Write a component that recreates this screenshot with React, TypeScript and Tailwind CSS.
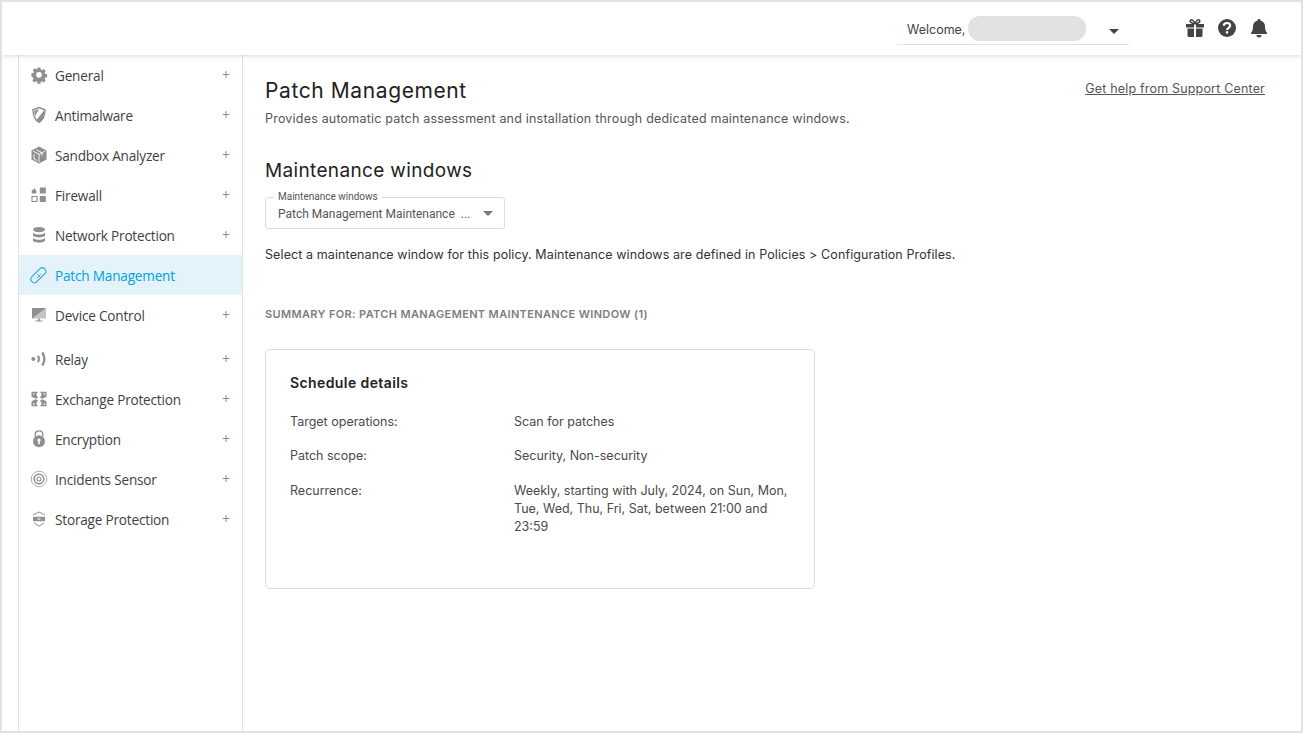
import React from "react";

const G = "#8f8f8f";
const Gear = () => (
  <svg width="18" height="18" viewBox="0 0 18 18"><path fill={G} fillRule="evenodd" transform="translate(.9 .9) scale(.9)" d="M7.4 0.800h3.200l.4 2.200 1.300.6 1.900-1.200 2.200 2.200-1.200 1.900.6 1.300 2.200.4v3.200l-2.200.4-.6 1.300 1.200 1.900-2.200 2.200-1.900-1.200-1.300.6-.4 2.200H7.400l-.4-2.200-1.300-.6-1.900 1.200-2.200-2.200 1.200-1.900-.6-1.300L.5 10.400V7.200l2.200-.4.6-1.300-1.200-1.900 2.200-2.200 1.900 1.200L7 3zM9 5.600a3.200 3.200 0 1 0 0 6.400 3.200 3.200 0 0 0 0-6.400z" /></svg>
);
const Shield = () => (
  <svg width="18" height="18" viewBox="0 0 18 18"><path fill="none" stroke={G} strokeWidth="1.400" d="M9 1.500 15 3.800c0 5.600-1.500 9.800-6 12.700C4.500 13.600 3 9.400 3 3.800z" /><path fill={G} d="M14 4.500 6.200 14.200C7.600 15.400 8.500 15.800 9 16c4.300-2.500 5.300-6.500 5-11.500z" /><path fill={G} d="M9 3 4.300 4.700c0 2 .2 3.800.8 5.500z" /></svg>
);
const Box = () => (
  <svg width="18" height="18" viewBox="0 0 18 18"><path fill={G} d="M9 .5 16.500 4.500v9L9 17.500 1.500 13.500v-9z" /><path fill="none" stroke="#fff" strokeWidth=".9" d="M3 5.200 9 8.200l6-3M9 8.200v8M6 3.700l6 3v3M4 8v5l3 1.500" /></svg>
);
const Firewall = () => (
  <svg width="18" height="18" viewBox="0 0 18 18"><path fill={G} d="M4.200 1.500c.3 1.400 2.300 2.400 2.300 4.400 0 1-.6 1.600-1.400 1.600H3C2.200 7.500 1.600 6.800 1.600 5.900c0-1.200.8-1.600 1-2.600.6.300.8.700.9 1.100.4-.8.800-1.800.7-2.900z" /><rect x="9.800" y="1.500" width="6" height="6" fill={G} /><rect x="2" y="10.500" width="5" height="5" fill="none" stroke={G} strokeWidth="1.100" /><rect x="9.800" y="10" width="6" height="6" fill={G} /></svg>
);
const Db = () => (
  <svg width="18" height="18" viewBox="0 0 18 18"><ellipse cx="9" cy="3.600" rx="6" ry="2.600" fill={G} /><path fill={G} d="M3 6.500c1 1.500 3.200 2 6 2s5-.5 6-2v2.600c0 1.400-2.800 2.400-6 2.400s-6-1-6-2.400z" /><path fill={G} d="M3 11.700c1 1.500 3.200 2 6 2s5-.5 6-2v2.600c0 1.400-2.800 2.400-6 2.400s-6-1-6-2.400z" /></svg>
);
const Band = () => (
  <svg width="18" height="18" viewBox="0 0 18 18" fill="none" stroke="#2aa7de" strokeWidth="1.100"><rect x="0" y="5.500" width="18" height="7" rx="3.500" transform="rotate(-45 9 10)" /><path d="M6.800 7.800 11.200 12.200M6.800 12.200l4.400-4.400" strokeWidth=".8" /></svg>
);
const Monitor = () => (
  <svg width="18" height="18" viewBox="0 0 18 18"><rect x="2" y="2" width="14" height="10.500" fill="#c4c4c4" /><path fill={G} d="M2 2h14L2 12.500z" /><path fill={G} d="M8.200 12.500h1.600v2H8.200zM5.500 14.500h7v1h-7z" /></svg>
);
const Relay = () => (
  <svg width="18" height="18" viewBox="0 0 18 18" fill="none" stroke={G} strokeWidth="2"><circle cx="3.300" cy="9" r="2" fill={G} stroke="none" /><path d="M8 5.800c1.200 2 1.200 4.400 0 6.400" /><path d="M12.300 2.500c2.600 4 2.600 9 0 13" strokeWidth="2.300" /></svg>
);
const Corner = () => (
  <path fill={G} fillRule="evenodd" d="M1.500 1.800H8L6.200 4.600 8 7.600 6 8.800 1.500 6.800zM3 3.200v2l2-2z" />
);
const Exchange = () => (
  <svg width="18" height="18" viewBox="0 0 18 18">
    <Corner />
    <g transform="matrix(-1 0 0 1 18 0)"><Corner /></g>
    <g transform="matrix(1 0 0 -1 0 18)"><Corner /></g>
    <g transform="matrix(-1 0 0 -1 18 18)"><Corner /></g>
  </svg>
);
const Lock = () => (
  <svg width="18" height="18" viewBox="0 0 18 18"><path fill="none" stroke={G} strokeWidth="1.300" d="M5.200 6.500V4.300C5.200 2 7 .8 9 .8s3.800 1.200 3.800 3.500v2.200" /><circle cx="9" cy="11.300" r="6" fill={G} /><circle cx="9" cy="10" r="1.600" fill="#fff" /><path fill="#fff" d="M8.200 10.500h1.600v3.700H8.200z" /></svg>
);
const Sensor = () => (
  <svg width="18" height="18" viewBox="0 0 18 18" fill="none" stroke={G}><circle cx="9" cy="9" r="7.800" strokeWidth="1" stroke="#b0b0b0" /><circle cx="9" cy="9" r="4.800" strokeWidth="1.500" /><circle cx="9" cy="9" r="2" strokeWidth="1.100" /></svg>
);
const Storage = () => (
  <svg width="18" height="18" viewBox="0 0 18 18"><path fill="none" stroke={G} strokeWidth="1" d="M3 5 9 2l6 3" /><path fill={G} d="M3 6.800h12v4.400H3z" /><path fill="#fff" d="M7.500 8.500h3v1h-3z" /><path fill="none" stroke={G} strokeWidth="1" d="M4 12.800 9 16.200l5-3.400" /></svg>
);

const items: { label: string; icon: React.ReactNode; cls: string; active?: boolean }[] = [
  { label: "General", icon: <Gear />, cls: "h-10" },
  { label: "Antimalware", icon: <Shield />, cls: "h-10" },
  { label: "Sandbox Analyzer", icon: <Box />, cls: "h-10" },
  { label: "Firewall", icon: <Firewall />, cls: "h-10" },
  { label: "Network Protection", icon: <Db />, cls: "h-10" },
  { label: "Patch Management", icon: <Band />, cls: "h-10", active: true },
  { label: "Device Control", icon: <Monitor />, cls: "h-10" },
  { label: "Relay", icon: <Relay />, cls: "h-10 mt-1" },
  { label: "Exchange Protection", icon: <Exchange />, cls: "h-10" },
  { label: "Encryption", icon: <Lock />, cls: "h-10" },
  { label: "Incidents Sensor", icon: <Sensor />, cls: "h-10" },
  { label: "Storage Protection", icon: <Storage />, cls: "h-10" },
];

const main = "font-['Inter','Liberation_Sans',sans-serif]";

const Row = ({ k, children }: { k: string; children: React.ReactNode }) => (
  <div className="flex text-[12.5px] leading-[18px] text-[#4a4a4a]">
    <div className="w-[224px] shrink-0">{k}</div>
    <div className="w-[280px]">{children}</div>
  </div>
);

export default function App() {
  return (
    <div className={`h-[733px] w-[1303px] overflow-hidden border-2 border-[#e2e2e2] bg-white flex flex-col ${main}`}>
      <header className="h-[53px] shrink-0 bg-white shadow-[0_1px_4px_rgba(0,0,0,0.16)] relative z-10 flex justify-end items-start">
        <div className="mt-[14px] w-[232px] h-[29px] border-b border-[#e2e2e2] flex items-start pl-[10px] text-[12.5px] text-[#444]">
          <span className="leading-[28px] w-[61px] whitespace-nowrap">Welcome,</span>
          <span className="w-[118px] h-[25px] rounded-[12px] bg-[#e1e1e1]" />
          <span className="ml-[23px] mt-[13px] border-x-[5px] border-t-[5px] border-x-transparent border-t-[#444]" />
        </div>
        <div className="mt-[16px] ml-[56px] mr-[32px] flex gap-[12px] items-center">
          <svg width="20" height="20" viewBox="0 0 20 20" fill="#444"><path d="M1 6h8v3.500H1zM11 6h8v3.500h-8zM2.500 10.500H9V19H4a1.500 1.500 0 0 1-1.500-1.500zM11 10.500h6.500v7A1.500 1.500 0 0 1 16 19h-5z" /><path fill="none" stroke="#444" strokeWidth="1.600" d="M10 5.500C8.500 2 6.500 1.200 5.500 2.200 4.500 3.500 6 5.500 10 5.500c4 0 5.500-2 4.500-3.300-1-1-3-.2-4.500 3.300z" /></svg>
          <svg width="20" height="20" viewBox="0 0 20 20"><circle cx="10" cy="10" r="9" fill="#444" /><path fill="none" stroke="#fff" strokeWidth="2.200" d="M6.800 7.700C6.800 5.800 8.300 5 10 5c1.800 0 3.200 1 3.200 2.600 0 2.300-3.200 2.300-3.200 4.400" /><rect x="8.800" y="13.200" width="2.400" height="2.300" fill="#fff" /></svg>
          <svg width="20" height="20" viewBox="0 0 20 20" fill="#444"><path d="M10 1c1 0 1.500.7 1.500 1.500C14.500 3.300 16 5.800 16 8.500c0 3.500 1 5 2 6.500v1H2v-1c1-1.500 2-3 2-6.500 0-2.700 1.500-5.200 4.500-6C8.500 1.700 9 1 10 1z" /><path d="M7.500 17h5a2.500 2.500 0 0 1-5 0z" /></svg>
        </div>
      </header>
      <div className="flex-1 flex min-h-0">
        <aside className="ml-4 w-[225px] shrink-0 border-x border-[#e2e2e2] font-['Open_Sans','Noto_Sans',sans-serif]">
          {items.map((it) => (
            <div key={it.label} className={`${it.cls} flex items-center pl-[11px] pr-[12px] ${it.active ? "bg-[#e4f3fa] text-[#00a0e0]" : "text-[#3f3f3f]"}`}>
              <span className="w-[18px] h-[18px] mr-[7px] -mt-[1px] shrink-0">{it.icon}</span>
              <span className="flex-1 text-[13.6px] tracking-[-0.2px] leading-[20px] mt-[1px]">{it.label}</span>
              {!it.active && <span className="text-[14px] leading-[14px] text-[#8f8f8f] -mt-[1px]">+</span>}
            </div>
          ))}
        </aside>
        <main className="flex-1 pl-[22px] pr-[36px] text-[#4a4a4a]">
          <div className="flex justify-between items-start pt-[21px]">
            <h1 className="text-[21px] leading-[30px] font-normal tracking-[0.6px] text-[#222]">Patch Management</h1>
            <a className="text-[12.5px] underline leading-[16px] mt-[5px] tracking-[0.18px] text-[#555]">Get help from Support Center</a>
          </div>
          <p className="mt-[4px] text-[12.5px] leading-[18px] tracking-[0.2px] text-[#555]">Provides automatic patch assessment and installation through dedicated maintenance windows.</p>
          <h2 className="mt-[29px] text-[19px] leading-[28px] font-normal tracking-[0.35px] text-[#222]">Maintenance windows</h2>
          <div className="relative mt-[12px] w-[240px] h-[32px] rounded-[3px] border border-[#dcdcdc] flex items-center pl-[12px] pr-[11px] font-['Roboto',sans-serif]">
            <span className="absolute -top-[7px] left-[8px] bg-white px-[4px] text-[10px] leading-[12px] text-[#555]">Maintenance windows</span>
            <span className="text-[12px] leading-[16px] text-[#555] flex-1 whitespace-nowrap mt-[1px]">Patch Management Maintenance &nbsp;...</span>
            <span className="border-x-[5.5px] border-t-[5.5px] border-x-transparent border-t-[#777]" />
          </div>
          <p className="mt-[17px] text-[12.5px] leading-[18px] tracking-[0.1px] text-[#333]">Select a maintenance window for this policy. Maintenance windows are defined in Policies &gt; Configuration Profiles.</p>
          <div className="mt-[42px] text-[11px] leading-[16px] font-semibold tracking-[0.36px] text-[#7d7d7d]">SUMMARY FOR: PATCH MANAGEMENT MAINTENANCE WINDOW (1)</div>
          <section className="mt-[27px] w-[550px] h-[240px] rounded-[5px] border border-[#dcdcdc] pl-[24px] pt-[24px]">
            <h3 className="text-[14px] leading-[18px] font-semibold tracking-[0.4px] text-[#222]">Schedule details</h3>
            <div className="mt-[21px] flex flex-col">
              <Row k="Target operations:">Scan for patches</Row>
              <div className="h-[16px]" />
              <Row k="Patch scope:">Security, Non-security</Row>
              <div className="h-[17px]" />
              <Row k="Recurrence:">Weekly, starting with July, 2024, on Sun, Mon, Tue, Wed, Thu, Fri, Sat, between 21:00 and 23:59</Row>
            </div>
          </section>
        </main>
      </div>
    </div>
  );
}
